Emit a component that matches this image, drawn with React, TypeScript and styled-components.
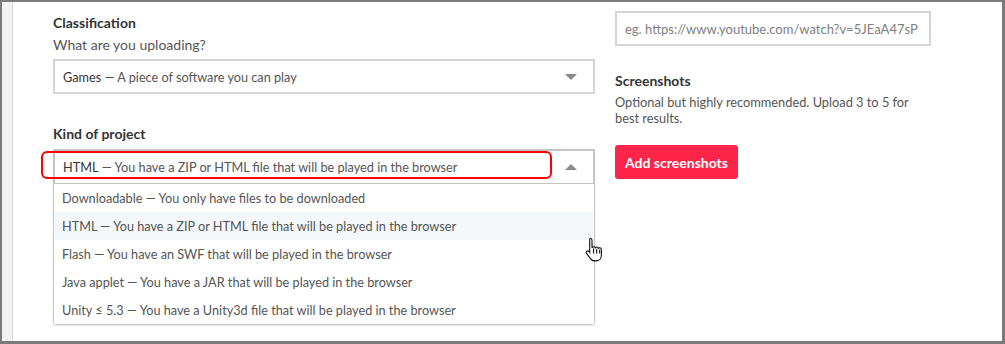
import React from 'react';
import styled, { createGlobalStyle } from 'styled-components';

const GlobalStyle = createGlobalStyle`
  body {
    margin: 0;
    font-family: Lato, "Liberation Sans", sans-serif;
  }
`;

const Frame = styled.div`
  width: 1005px;
  height: 344px;
  box-sizing: border-box;
  border-style: solid;
  border-color: #7a7a7a;
  border-width: 2px 3px 3px 2px;
  background: #f2f2f2;
  display: flex;
  overflow: hidden;
  position: relative;
`;

const Gutter = styled.div<{ $side: 'left' | 'right' }>`
  width: ${(p) => (p.$side === 'left' ? '10px' : '28px')};
  flex-shrink: 0;
`;

const Main = styled.div`
  width: 960px;
  flex-shrink: 0;
  background: #fff;
  border-left: 1px solid #dcdcdc;
  border-right: 1px solid #dcdcdc;
  display: grid;
  grid-template-columns: 542px 316px;
  column-gap: 20px;
  padding-left: 40px;
  box-sizing: content-box;
  align-items: start;
`;

const Column = styled.div`
  display: flex;
  flex-direction: column;
`;

const Label = styled.div`
  font-size: 14px;
  font-weight: 700;
  color: #333;
  line-height: 18px;
`;

const Hint = styled.div`
  font-size: 14px;
  color: #555;
  line-height: 16px;
  margin-top: 5px;
`;

const SelectBox = styled.div<{ $open?: boolean }>`
  height: 35px;
  box-sizing: border-box;
  border: 2px solid #d4d4d4;
  ${(p) => p.$open && 'border-color: #c4c4c4; border-bottom-width: 1px;'}
  display: flex;
  align-items: center;
  padding: 0 16px 0 8px;
  font-size: 12.7px;
  color: #555;
  position: relative;
  background: #fff;
`;

const Strong = styled.span`
  color: #333;
`;

const Caret = styled.span<{ $up?: boolean }>`
  margin-left: auto;
  width: 0;
  height: 0;
  border-left: 6px solid transparent;
  border-right: 6px solid transparent;
  ${(p) =>
    p.$up ? 'border-bottom: 6px solid #8a8a8a;' : 'border-top: 6px solid #8a8a8a;'}
`;

const Highlight = styled.div`
  position: absolute;
  left: -14px;
  top: 0px;
  width: 511px;
  height: 28px;
  box-sizing: border-box;
  border: 2px solid #f00;
  border-radius: 6px;
  pointer-events: none;
`;

const Menu = styled.div`
  border: 1px solid #c8c8c8;
  border-top: none;
  border-radius: 0 0 4px 4px;
  box-shadow: 0 1px 2px rgba(0, 0, 0, 0.12);
  background: #fff;
`;

const Option = styled.div<{ $hover?: boolean }>`
  height: 28px;
  display: flex;
  align-items: center;
  padding-left: 8px;
  font-size: 12.7px;
  color: #555;
  background: ${(p) => (p.$hover ? '#f4f8fb' : '#fff')};
`;

const TextInput = styled.div`
  height: 35px;
  box-sizing: border-box;
  border: 2px solid #d4d4d4;
  display: flex;
  align-items: center;
  padding: 0 8px;
  font-size: 13px;
  color: #808080;
  white-space: nowrap;
  overflow: hidden;
`;

const Para = styled.div`
  font-size: 12.8px;
  color: #555;
  line-height: 16px;
  margin-top: 4px;
  width: 300px;
`;

const Button = styled.button`
  align-self: flex-start;
  margin-top: 19px;
  height: 34px;
  padding: 0 10px;
  border: none;
  border-radius: 3px;
  background: #ff2449;
  color: #fff;
  font-family: Lato, "Liberation Sans", sans-serif;
  font-size: 14px;
  font-weight: 700;
`;

const Cursor = styled.svg`
  position: absolute;
  left: 583px;
  top: 235px;
`;

const options = [
  ['Downloadable', 'You only have files to be downloaded'],
  ['HTML', 'You have a ZIP or HTML file that will be played in the browser'],
  ['Flash', 'You have an SWF that will be played in the browser'],
  ['Java applet', 'You have a JAR that will be played in the browser'],
  ['Unity ≤ 5.3', 'You have a Unity3d file that will be played in the browser'],
];

export default function App() {
  return (
    <>
      <GlobalStyle />
      <Frame>
        <Gutter $side="left" />
        <Main>
          <Column style={{ paddingTop: 12 }}>
            <Label>Classification</Label>
            <Hint>What are you uploading?</Hint>
            <SelectBox style={{ marginTop: 6 }}>
              <Strong>Games</Strong>&nbsp;— A piece of software you can play
              <Caret />
            </SelectBox>
            <Label style={{ marginTop: 31 }}>Kind of project</Label>
            <SelectBox $open style={{ marginTop: 6 }}>
              <Highlight />
              <Strong>HTML</Strong>&nbsp;— You have a ZIP or HTML file that will be played in the browser
              <Caret $up />
            </SelectBox>
            <Menu>
              {options.map(([name, desc], i) => (
                <Option key={name} $hover={i === 1}>
                  {name}&nbsp;— {desc}
                </Option>
              ))}
            </Menu>
          </Column>
          <Column style={{ paddingTop: 9 }}>
            <TextInput>eg. https://www.youtube.com/watch?v=5JEaA47sP</TextInput>
            <Label style={{ marginTop: 26 }}>Screenshots</Label>
            <Para>Optional but highly recommended. Upload 3 to 5 for best results.</Para>
            <Button>Add screenshots</Button>
          </Column>
        </Main>
        <Gutter $side="right" />
        <Cursor width="19" height="27" viewBox="0 0 18 26">
          <path
            d="M5 1.5c1 0 1.6.7 1.6 1.6v7.2c.3-.6.9-.9 1.5-.9.8 0 1.4.5 1.6 1.1.3-.5.8-.8 1.4-.8.8 0 1.4.5 1.6 1.2.3-.4.8-.6 1.3-.6 1 0 1.600.8 1.6 1.7v5.5c0 3.2-2.2 5.5-5.300 5.5H8.9c-1.6 0-2.7-.7-3.6-1.9L1.3 15.8c-.5-.7-.4-1.6.3-2.1.6-.5 1.5-.4 2 .2l.8 1V3.1C4.4 2.2 4.200 1.5 5 1.5z"
            fill="#fff"
            stroke="#000"
            strokeWidth="1"
          />
          <path d="M8.1 11v5M11.1 11.5v4.5M14 12.2v3.8" stroke="#000" strokeWidth="1" />
        </Cursor>
      </Frame>
    </>
  );
}
